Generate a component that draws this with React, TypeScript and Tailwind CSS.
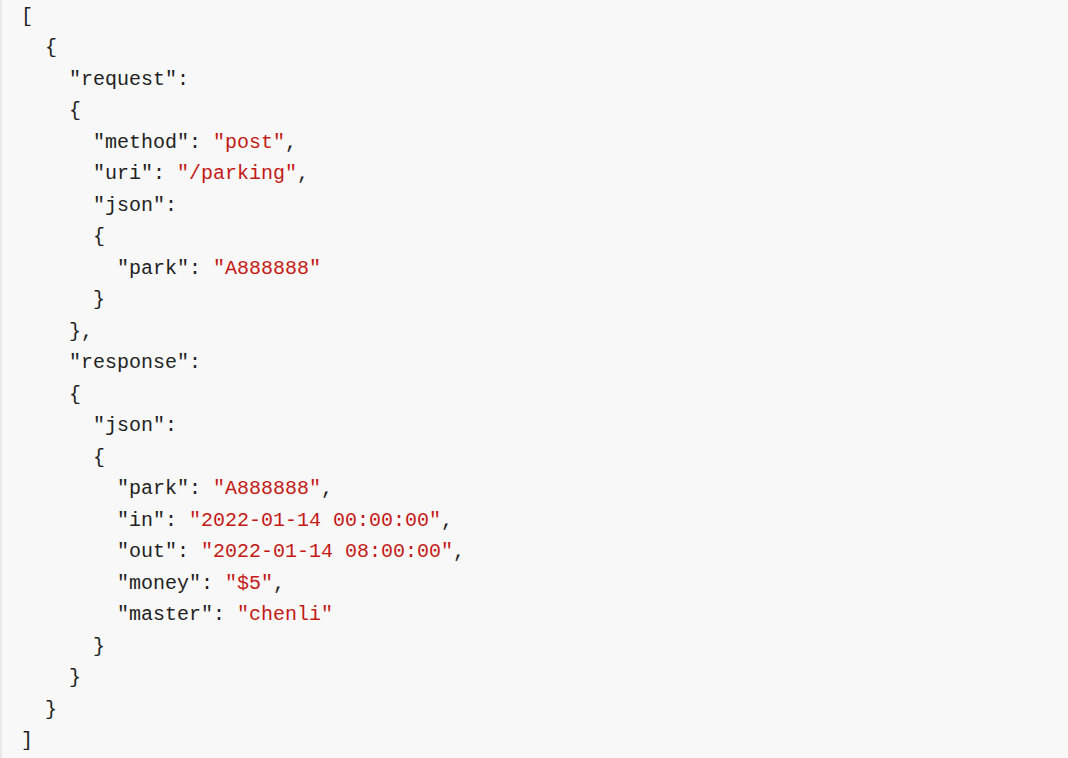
type Tok = { t: string; s?: boolean };

const k = (t: string): Tok => ({ t });
const s = (t: string): Tok => ({ t, s: true });

const lines: [number, Tok[]][] = [
  [0, [k("[")]],
  [1, [k("{")]],
  [2, [k('"request":')]],
  [2, [k("{")]],
  [3, [k('"method": '), s('"post"'), k(",")]],
  [3, [k('"uri": '), s('"/parking"'), k(",")]],
  [3, [k('"json":')]],
  [3, [k("{")]],
  [4, [k('"park": '), s('"A888888"')]],
  [3, [k("}")]],
  [2, [k("},")]],
  [2, [k('"response":')]],
  [2, [k("{")]],
  [3, [k('"json":')]],
  [3, [k("{")]],
  [4, [k('"park": '), s('"A888888"'), k(",")]],
  [4, [k('"in": '), s('"2022-01-14 00:00:00"'), k(",")]],
  [4, [k('"out": '), s('"2022-01-14 08:00:00"'), k(",")]],
  [4, [k('"money": '), s('"$5"'), k(",")]],
  [4, [k('"master": '), s('"chenli"')]],
  [3, [k("}")]],
  [2, [k("}")]],
  [1, [k("}")]],
  [0, [k("]")]],
];

export default function App() {
  return (
    <div className="w-[1068px] h-[758px] bg-[#f8f8f8] border-l-2 border-[#e9e9e9] overflow-hidden">
      <pre className="m-0 pt-[1px] pl-[19px] font-['Liberation_Mono','Courier_New',monospace] text-[20px] leading-[31.48px] text-[#222]">
        {lines.map(([ind, toks], i) => (
          <div key={i}>
            {"  ".repeat(ind)}
            {toks.map((tk, j) =>
              tk.s ? (
                <span key={j} className="text-[#c41a16]">
                  {tk.t}
                </span>
              ) : (
                <span key={j}>{tk.t}</span>
              )
            )}
          </div>
        ))}
      </pre>
    </div>
  );
}
